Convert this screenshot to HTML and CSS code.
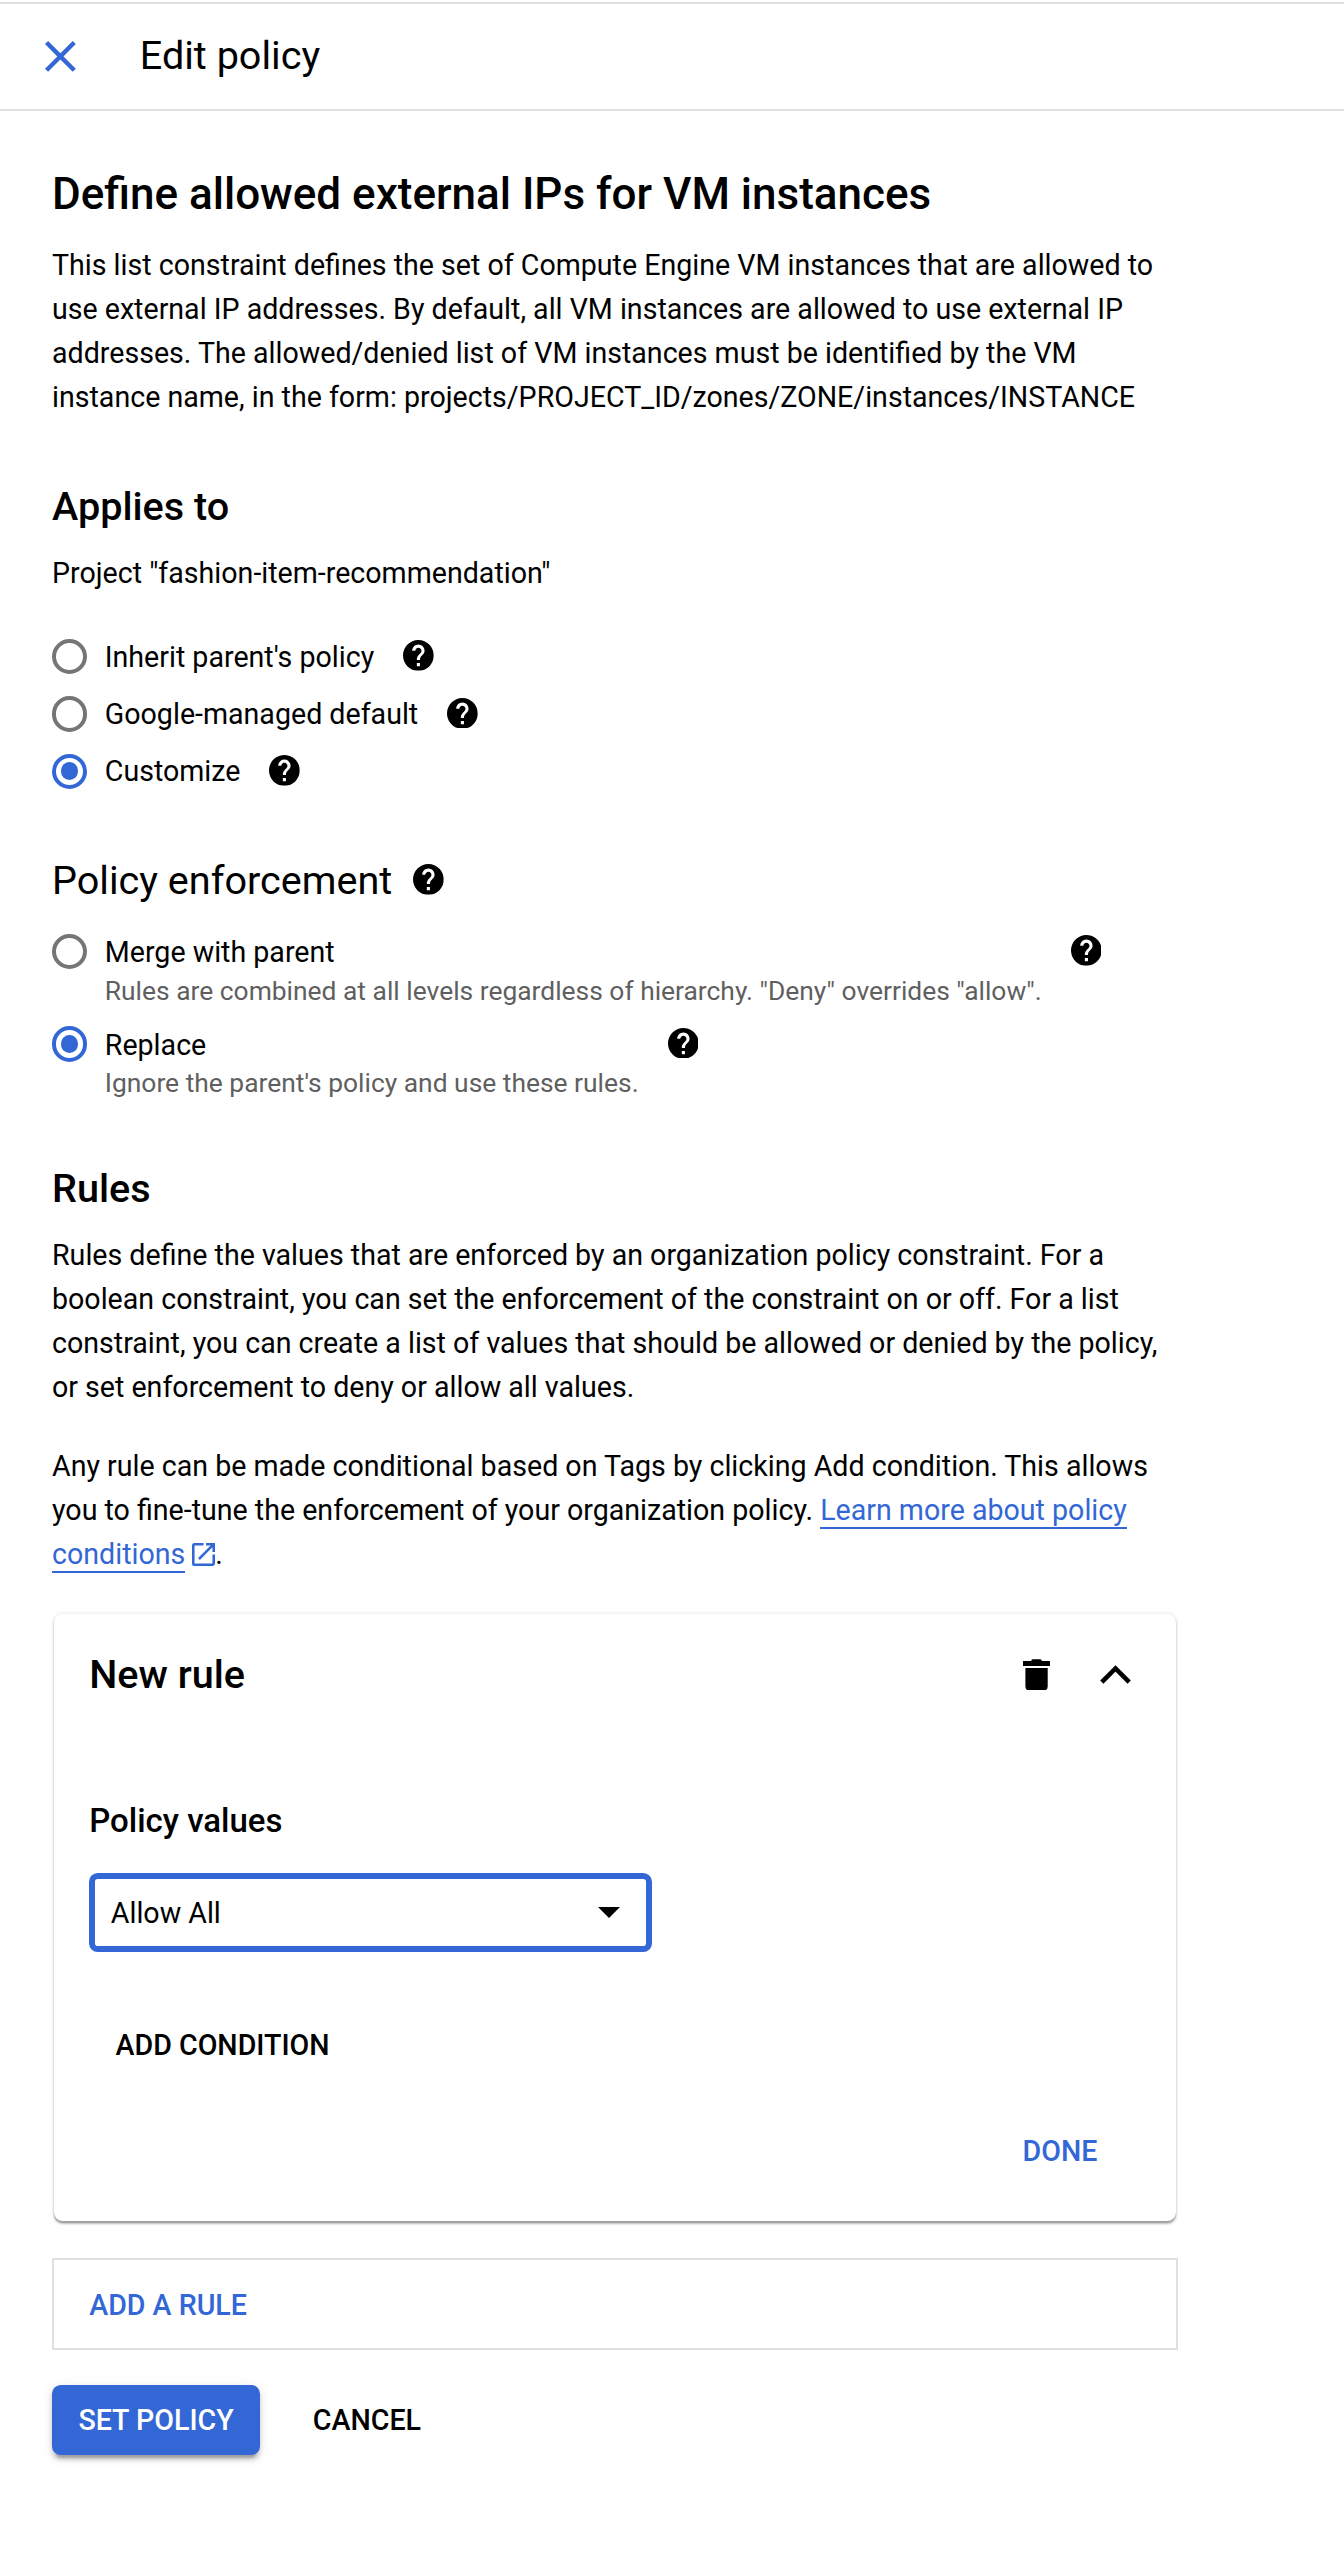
FILE: index.html
```html
<!DOCTYPE html>
<html lang="en">
<head>
<meta charset="utf-8">
<title>Edit policy</title>
<link rel="stylesheet" href="styles.css">
</head>
<body>
<svg class="defs" width="0" height="0" aria-hidden="true">
  <symbol id="help" viewBox="2 2 20 20">
    <path d="M12 2C6.48 2 2 6.48 2 12s4.48 10 10 10 10-4.48 10-10S17.52 2 12 2zm1 17h-2v-2h2v2zm2.07-7.75l-.9.92C13.45 12.9 13 13.5 13 15h-2v-.5c0-1.1.45-2.1 1.17-2.83l1.24-1.26c.37-.36.59-.86.59-1.41 0-1.1-.9-2-2-2s-2 .9-2 2H8c0-2.21 1.79-4 4-4s4 1.79 4 4c0 .88-.36 1.68-.93 2.25z"/>
  </symbol>
</svg>
<header class="topbar">
  <svg class="close" viewBox="0 0 14 14"><path d="M14 1.41L12.59 0 7 5.59 1.41 0 0 1.41 5.59 7 0 12.59 1.41 14 7 8.41 12.59 14 14 12.59 8.41 7z"/></svg>
  <span class="topbar-title">Edit policy</span>
</header>
<main class="content">
  <h1 class="title">Define allowed external IPs for VM instances</h1>
  <p class="text intro">This list constraint defines the set of Compute Engine VM instances that are allowed to<br>use external IP addresses. By default, all VM instances are allowed to use external IP<br>addresses. The allowed/denied list of VM instances must be identified by the VM<br>instance name, in the form: projects/PROJECT_ID/zones/ZONE/instances/INSTANCE</p>

  <h2 class="heading applies">Applies to</h2>
  <p class="text project">Project "fashion-item-recommendation"</p>
  <div class="options">
    <div class="option"><span class="radio"></span><span class="option-label">Inherit parent's policy</span><svg class="help"><use href="#help"/></svg></div>
    <div class="option"><span class="radio"></span><span class="option-label">Google-managed default</span><svg class="help"><use href="#help"/></svg></div>
    <div class="option"><span class="radio checked"></span><span class="option-label">Customize</span><svg class="help"><use href="#help"/></svg></div>
  </div>

  <h2 class="heading enforcement">Policy enforcement<svg class="help"><use href="#help"/></svg></h2>
  <div class="modes">
    <div class="mode"><span class="radio"></span><div class="mode-text"><div>Merge with parent</div><div class="mode-hint">Rules are combined at all levels regardless of hierarchy. "Deny" overrides "allow".</div></div><svg class="help"><use href="#help"/></svg></div>
    <div class="mode"><span class="radio checked"></span><div class="mode-text"><div>Replace</div><div class="mode-hint">Ignore the parent's policy and use these rules.</div></div><svg class="help"><use href="#help"/></svg></div>
  </div>

  <h2 class="heading rules">Rules</h2>
  <p class="text rules-text">Rules define the values that are enforced by an organization policy constraint. For a<br>boolean constraint, you can set the enforcement of the constraint on or off. For a list<br>constraint, you can create a list of values that should be allowed or denied by the policy,<br>or set enforcement to deny or allow all values.</p>
  <p class="text conditions-text">Any rule can be made conditional based on Tags by clicking Add condition. This allows<br>you to fine-tune the enforcement of your organization policy. <a class="link">Learn more about policy<br>conditions</a><svg class="external" viewBox="3 3 18 18"><path d="M19 19H5V5h7V3H5a2 2 0 0 0-2 2v14a2 2 0 0 0 2 2h14c1.1 0 2-.9 2-2v-7h-2v7zM14 3v2h3.59l-9.83 9.83 1.41 1.41L19 6.41V10h2V3h-7z"/></svg>.</p>

  <section class="card">
    <div class="card-head">
      <h2 class="heading">New rule</h2>
      <svg class="trash" viewBox="0 0 27 31.4"><path d="M8.2 2q0-1.7 1.7-1.7h7.3q1.7 0 1.7 1.7H27v5.1H0V2zM2.4 9.1h22.3v18.3q0 4-4 4H6.4q-4 0-4-4z"/></svg>
      <svg class="chevron" viewBox="0 0 31 19"><path d="M1.8 17.2 15.5 3.4l13.7 13.8"/></svg>
    </div>
    <h3 class="subheading">Policy values</h3>
    <div class="select"><span>Allow All</span><svg class="arrow" viewBox="0 0 22 11"><path d="M0 0h22L11 11z"/></svg></div>
    <button class="button add-condition">ADD CONDITION</button>
    <button class="button done">DONE</button>
  </section>

  <div class="add-rule"><button class="button blue">ADD A RULE</button></div>
  <div class="actions">
    <button class="button primary">SET POLICY</button>
    <button class="button">CANCEL</button>
  </div>
</main>
</body>
</html>
```
FILE: styles.css
```css
* { box-sizing: border-box; }
body {
  margin: 0;
  padding-top: 2px;
  min-height: 2562px;
  background: #fff;
  color: #000;
  font: 400 28.6px/44px Roboto, sans-serif;
}
svg { display: block; flex: none; }
.defs { position: absolute; }
h1, h2, h3, p { margin: 0; white-space: nowrap; }

.topbar {
  display: flex;
  align-items: center;
  height: 109px;
  padding-left: 45px;
  border-top: 2px solid #e0e0e0;
  border-bottom: 2px solid #e0e0e0;
}
.close { width: 30.8px; height: 30.8px; fill: #3367d6; }
.topbar-title { margin-left: 64px; font-size: 39.6px; line-height: 48px; padding-bottom: 2px; }

.content { width: 1178px; padding: 55px 0 0 52px; }
.title { font-size: 44px; line-height: 56px; font-weight: 500; }
.intro { margin-top: 21px; }
.heading { font-size: 39.6px; line-height: 48px; font-weight: 500; }
.applies { margin-top: 64px; }
.project { margin-top: 20px; }

.options { margin-top: 33.2px; }
.option { display: flex; align-items: center; height: 57.2px; }
.radio {
  flex: none;
  display: grid;
  place-items: center;
  width: 35.2px;
  height: 35.2px;
  border: 4.4px solid #757575;
  border-radius: 50%;
}
.checked { border-color: #3367d6; }
.checked::after { content: ""; width: 17.6px; height: 17.6px; border-radius: 50%; background: #3367d6; }
.option-label { margin-left: 17.6px; }
.help { width: 30.8px; height: 30.8px; margin: 0 0 2px 28.6px; fill: #000; }

.enforcement { display: flex; align-items: center; margin-top: 57.4px; font-weight: 400; }
.enforcement .help { margin: 0 0 3px 20.6px; }
.modes { display: flex; flex-direction: column; gap: 16px; margin-top: 28.2px; }
.mode { display: flex; align-items: flex-start; line-height: 38.2px; }
.mode .radio { margin-top: .6px; }
.mode-text { margin-left: 17.6px; }
.mode-hint { font-size: 26.4px; color: #5f5f5f; }
.mode .help { margin: 1.8px 0 0 29px; }

.rules { margin-top: 62.6px; }
.rules-text { margin-top: 20.4px; }
.conditions-text { margin-top: 35.3px; }
.link { color: #3367d6; border-bottom: 2px solid #3367d6; }
.external { display: inline-block; width: 23px; height: 23px; margin-left: 7px; vertical-align: -2px; fill: #3367d6; }

.card {
  display: flex;
  flex-direction: column;
  align-items: flex-start;
  height: 606.8px;
  margin: 37.8px 2px 0;
  padding: 36.5px 45px 0 35.2px;
  border-radius: 8.8px;
  box-shadow: 0 2.2px 2.2px rgba(0,0,0,.24), 0 0 4.4px rgba(0,0,0,.12), 0 2px 1px rgba(0,0,0,.14);
}
.card-head { display: flex; align-items: center; align-self: stretch; }
.trash { width: 27px; height: 31.4px; margin-left: auto; }
.chevron { width: 31px; height: 19px; margin-left: 50.4px; fill: none; stroke: #000; stroke-width: 4.6; }
.subheading { margin-top: 100.2px; font-size: 33px; line-height: 44px; font-weight: 500; }
.select {
  display: flex;
  align-items: center;
  justify-content: space-between;
  width: 562.5px;
  height: 78.7px;
  margin-top: 30.5px;
  padding: 0 25.5px 0 15.6px;
  border: 6px solid #3367d6;
  border-radius: 8.8px;
}
.arrow { width: 22px; height: 11px; }

.button {
  padding: 0;
  border: 0;
  background: none;
  color: #000;
  font: 500 28.6px/44px Roboto, sans-serif;
}
.add-condition { margin: 71.2px 0 0 26.4px; }
.done { align-self: flex-end; margin: 61.3px 33.6px 0 0; color: #3367d6; }
.blue { color: #3367d6; }
.add-rule {
  display: flex;
  align-items: center;
  height: 92px;
  margin-top: 37px;
  padding: 1px 0 0 35.2px;
  border: 2px solid #e0e0e0;
}
.actions { display: flex; align-items: center; gap: 52.8px; margin-top: 35px; }
.primary {
  width: 208px;
  height: 70px;
  border-radius: 8.8px;
  background: #3367d6;
  color: #fff;
  box-shadow: 0 6.6px 2.2px -4.4px rgba(0,0,0,.2), 0 4.4px 4.4px rgba(0,0,0,.14), 0 2.2px 11px rgba(0,0,0,.12);
}
```
